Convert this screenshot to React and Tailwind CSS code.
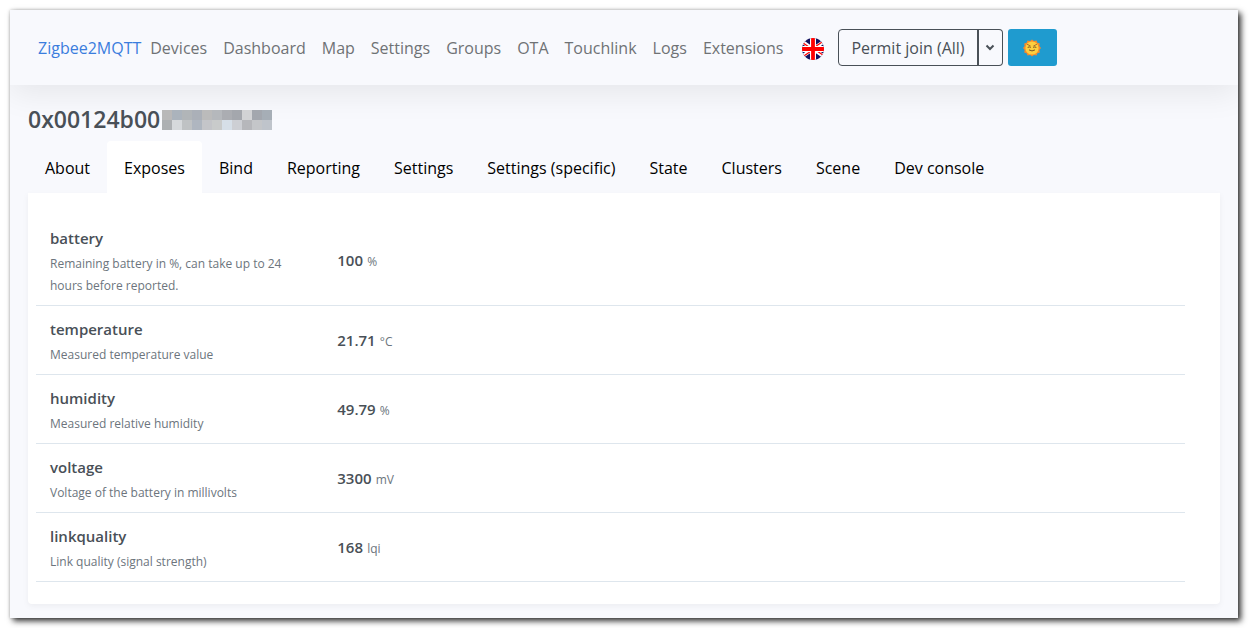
import React from "react";

const links = ["Devices", "Dashboard", "Map", "Settings", "Groups", "OTA", "Touchlink", "Logs", "Extensions"];

const tabs = ["About", "Exposes", "Bind", "Reporting", "Settings", "Settings (specific)", "State", "Clusters", "Scene", "Dev console"];

const features = [
  { name: "battery", note: "Remaining battery in %, can take up to 24 hours before reported.", value: "100", unit: "%" },
  { name: "temperature", note: "Measured temperature value", value: "21.71", unit: "°C" },
  { name: "humidity", note: "Measured relative humidity", value: "49.79", unit: "%" },
  { name: "voltage", note: "Voltage of the battery in millivolts", value: "3300", unit: "mV" },
  { name: "linkquality", note: "Link quality (signal strength)", value: "168", unit: "lqi" },
];

const mosaic = [
  ["#b9b8b8", "#abb3bc", "#b1b5b8", "#abb0b8", "#bbbbbb", "#b5b8bc", "#abadb2", "#a4a7ad", "#d2d3d5", "#a3a7ae", "#a6aeb6"],
  ["#adb0b3", "#d6d9dc", "#bfc2c4", "#afb6c0", "#c4c5c9", "#c9cbcb", "#d6dfe8", "#cdcfd4", "#b6b7bb", "#c4c6c9", "#bfc4cb"],
];

function HiddenDigits() {
  return (
    <svg width="110" height="20" viewBox="0 0 110 20" shapeRendering="crispEdges" aria-hidden="true">
      {mosaic.map((row, y) =>
        row.map((fill, x) => <rect key={`${x}-${y}`} x={x * 10} y={y * 10} width="10" height="10" fill={fill} />)
      )}
    </svg>
  );
}

function BritishFlag() {
  return (
    <svg width="22" height="22" viewBox="0 0 22 22" aria-hidden="true">
      <defs>
        <clipPath id="flag-round">
          <circle cx="11" cy="11" r="11" />
        </clipPath>
      </defs>
      <g clipPath="url(#flag-round)">
        <rect width="22" height="22" fill="#12125f" />
        <path d="M-3 1.500L25 20.500M25 1.500L-3 20.500" stroke="#fff" strokeWidth="3.600" />
        <path d="M-3 2.200L11 11.700M11 10.300L25 19.800M25 .8L11 10.300M11 11.700L-3 21.200" stroke="#f00" strokeWidth="1.300" />
        <path d="M11 0V22M0 11H22" stroke="#fff" strokeWidth="6" />
        <path d="M11 0V22M0 11H22" stroke="#f00" strokeWidth="3.800" />
      </g>
    </svg>
  );
}

function SunFace() {
  return (
    <svg width="18" height="18" viewBox="0 0 34 34" aria-hidden="true">
      <path
        d="M17 1l3.600 3 4.900-1.400 1.700 4.400 4.600 1.300-.9 4.800L34 17l-3.100 3.900.9 4.800-4.600 1.300-1.700 4.400-4.900-1.400L17 33l-3.600-3-4.900 1.400-1.700-4.400-4.600-1.300.9-4.800L0 17l3.100-3.900-.9-4.800 4.600-1.300 1.700-4.400 4.900 1.400z"
        fill="#f78a2b"
      />
      <circle cx="17" cy="17" r="12.500" fill="#fdcf3f" />
      <path d="M8 10l6 3.200M26 10l-6 3.200" fill="none" stroke="#a9682a" strokeWidth="1.800" strokeLinecap="round" />
      <path d="M9.500 15.500q2.500-1.500 4.500 0M20 15.500q2-1.500 4.500 0M12 21q5 3.500 10 0" fill="none" stroke="#6b4a20" strokeWidth="1.800" strokeLinecap="round" />
    </svg>
  );
}

function Navbar() {
  return (
    <header className="relative flex min-h-[75px] items-center bg-[#f8f9fd] pl-7 shadow-[0_8px_32px_rgba(0,0,0,0.08)]">
      <nav className="flex items-center text-base leading-6 text-[#6f7275]">
        <a href="#home" className="mr-[9px] text-[#3b7ddd]">Zigbee2MQTT</a>
        <div className="flex items-center gap-4">
          {links.map((label) => (
            <a key={label} href={`#${label.toLowerCase()}`}>{label}</a>
          ))}
        </div>
      </nav>
      <button type="button" aria-label="Language" className="ml-[19px] flex pt-[2px]">
        <BritishFlag />
      </button>
      <div className="ml-[14px] flex h-[37px] text-base text-[#495057]">
        <button type="button" className="rounded-l border border-[#495057] px-3">Permit join (All)</button>
        <button type="button" aria-label="Choose device" className="-ml-px flex w-[26px] items-center justify-center rounded-r border border-l-2 border-[#495057]">
          <svg width="10" height="7" viewBox="0 0 10 7" aria-hidden="true">
            <path d="M1.500 1.500L5 5L8.500 1.500" fill="none" stroke="#495057" strokeWidth="2" />
          </svg>
        </button>
      </div>
      <button type="button" aria-label="Theme" className="ml-[5px] flex h-[37px] w-[49px] items-center justify-center rounded-[3px] bg-[#1f9bcf]">
        <SunFace />
      </button>
    </header>
  );
}

function Tabs() {
  return (
    <nav className="flex">
      {tabs.map((label) => (
        <a
          key={label}
          href={`#tab-${label.toLowerCase().replace(/[^a-z]+/g, "-")}`}
          aria-current={label === "Exposes" ? "page" : undefined}
          className="flex h-[52px] items-center rounded-t px-[17px] pt-[2px] text-base text-black aria-[current=page]:bg-white"
        >
          {label}
        </a>
      ))}
    </nav>
  );
}

function Exposes() {
  return (
    <section className="rounded-b bg-white pt-[22px] pr-[35px] pb-[22px] pl-2 shadow-[0_2px_6px_rgba(0,0,0,0.05)]">
      <table className="w-full table-fixed border-collapse text-left">
        <tbody>
          {features.map(({ name, note, value, unit }) => (
            <tr key={name} className="border-b border-[#dee6ed]">
              <th scope="row" className="w-1/4 px-[14px] pt-[11px] pb-2 font-normal">
                <div className="pb-[1px] text-[15px] leading-6 font-semibold text-[#495057]">{name}</div>
                <div className="pt-[2px] text-[12px] leading-[22px] text-[#6c757d]">{note}</div>
              </th>
              <td className="px-[14px] py-[10px] align-middle text-[#495057]">
                <span className="text-[15px] font-semibold">{value}</span>{" "}
                <span className="text-[12px] text-[#6c757d]">{unit}</span>
              </td>
            </tr>
          ))}
        </tbody>
      </table>
    </section>
  );
}

export default function App() {
  return (
    <div className="bg-white p-[10px] pr-[11px] font-['Open_Sans','Noto_Sans',sans-serif]">
      <div className="overflow-hidden bg-[#f8f9fd] pb-[14px] shadow-[3px_3px_6px_rgba(0,0,0,0.8),0_0_3px_rgba(0,0,0,0.2)]">
        <Navbar />
        <main className="relative mr-[18px] ml-[18px] pt-[14px]">
          <h1 className="flex h-[42px] items-start text-[23px] leading-10 font-semibold text-[#495057]">
            0x00124b00
            <span className="flex h-[42px] pt-[11px] pl-[2px]">
              <HiddenDigits />
            </span>
          </h1>
          <Tabs />
          <Exposes />
        </main>
      </div>
    </div>
  );
}
